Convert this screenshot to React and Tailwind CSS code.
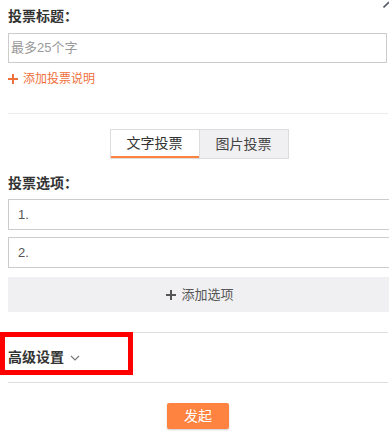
import React from "react";

const font = { fontFamily: '"Liberation Sans", "Noto Sans CJK SC", sans-serif' };

function Plus({ className }) {
  return (
    <svg viewBox="0 0 10 10" className={className} fill="currentColor">
      <rect x="4" y="0" width="2" height="10" />
      <rect x="0" y="4" width="10" height="2" />
    </svg>
  );
}

function OptionInput({ label }) {
  return (
    <div className="flex h-[31px] w-[390px] items-center border border-[#cccccc] pl-[9px] text-[13px] text-[#555]">
      {label}
    </div>
  );
}

export default function App() {
  return (
    <div className="relative h-[446px] w-[389px] overflow-hidden bg-white" style={font}>
      {/* close icon, cut off at the edge */}
      <svg className="absolute right-0 top-[1px] h-[7px] w-[6px]" viewBox="0 0 6 7">
        <line x1="0.5" y1="6.5" x2="6" y2="1" stroke="#555a66" strokeWidth="1.6" />
      </svg>

      <div className="w-[390px] pl-2 pt-2">
        <div className="text-[14px] font-bold leading-[17px] text-[#333]">投票标题：</div>
        <div className="mt-2 flex h-[30px] w-[379px] items-center border border-[#cccccc] pl-[2px] text-[13px] text-[#999]">
          最多25个字
        </div>
        <div className="mt-2 flex h-4 items-center gap-[5px] text-[12px] text-[#f0703c]">
          <Plus className="h-[10px] w-[10px]" />
          <span>添加投票说明</span>
        </div>

        <div className="mt-[26px] h-px w-[380px] bg-[#ececec]" />

        <div className="mt-[15px] flex justify-center">
          <div className="flex h-[30px] border border-[#dcdcdc]">
            <div className="flex w-[88px] items-center justify-center border-b-2 border-[#ff8340] bg-white text-[14px] text-[#333]">
              文字投票
            </div>
            <div className="flex w-[89px] items-center justify-center border-l border-[#dcdcdc] bg-[#f0f0f2] text-[14px] text-[#444]">
              图片投票
            </div>
          </div>
        </div>

        <div className="mt-4 text-[14px] font-bold leading-4 text-[#333]">投票选项：</div>

        <div className="mt-2 flex flex-col gap-[7px]">
          <OptionInput label="1." />
          <OptionInput label="2." />
        </div>

        <div className="mt-[9px] flex h-[35px] w-[384px] items-center justify-center gap-[5px] bg-[#f0f0f2] text-[13px] text-[#555]">
          <Plus className="h-[10px] w-[10px] text-[#555]" />
          <span>添加选项</span>
        </div>

        <div className="mt-5 h-px w-[380px] bg-[#dedede]" />

        <div className="flex h-[49px] items-center gap-[6px]">
          <span className="text-[14px] font-bold text-[#333]">高级设置</span>
          <svg viewBox="0 0 10 6" className="h-[6px] w-[10px]" fill="none" stroke="#777" strokeWidth="1.2">
            <polyline points="1,1 5,5 9,1" />
          </svg>
        </div>

        <div className="h-px w-[380px] bg-[#dedede]" />

        <div className="mt-5 flex w-[380px] justify-center">
          <button className="h-[26px] w-[62px] rounded-[2px] bg-[#ff8340] text-[14px] text-white shadow-[0_1px_2px_rgba(0,0,0,0.2)]">
            发起
          </button>
        </div>
      </div>

      {/* annotation box */}
      <div className="absolute left-0 top-[332px] h-[43px] w-[133px] border-[5px] border-[#ff0000]" />
    </div>
  );
}
